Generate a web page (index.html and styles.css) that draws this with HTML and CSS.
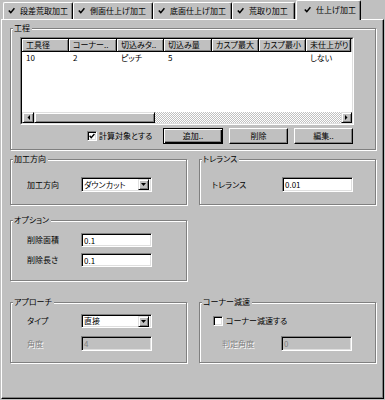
FILE: index.html
```html
<!DOCTYPE html>
<html lang="ja">
<head>
<meta charset="utf-8">
<title>仕上げ加工</title>
<link rel="stylesheet" href="styles.css">
</head>
<body>
<div class="tabs">
  <div class="tab t1"><svg class="tick" viewBox="0 0 7 7" width="7" height="7"><polyline points="0.8,3.4 2.8,5.6 6.4,1.2"/></svg><span>段差荒取加工</span></div>
  <div class="tab t2"><svg class="tick" viewBox="0 0 7 7" width="7" height="7"><polyline points="0.8,3.4 2.8,5.6 6.4,1.2"/></svg><span>側面仕上げ加工</span></div>
  <div class="tab t3"><svg class="tick" viewBox="0 0 7 7" width="7" height="7"><polyline points="0.8,3.4 2.8,5.6 6.4,1.2"/></svg><span>底面仕上げ加工</span></div>
  <div class="tab t4"><svg class="tick" viewBox="0 0 7 7" width="7" height="7"><polyline points="0.8,3.4 2.8,5.6 6.4,1.2"/></svg><span>荒取り加工</span></div>
  <div class="tab t5 active"><svg class="tick" viewBox="0 0 7 7" width="7" height="7"><polyline points="0.8,3.4 2.8,5.6 6.4,1.2"/></svg><span>仕上げ加工</span></div>
</div>
<div class="panel">
  <div class="group g-process">
    <span class="legend">工程</span>
    <div class="listview">
      <div class="lv-inner">
        <div class="lv-head">
          <div class="hd c1">工具径</div>
          <div class="hd c2">コーナー..</div>
          <div class="hd c3">切込みタ..</div>
          <div class="hd c4">切込み量</div>
          <div class="hd c5">カスプ最大</div>
          <div class="hd c6">カスプ最小</div>
          <div class="hd c7">未仕上がり</div>
        </div>
        <div class="lv-body">
          <div class="lv-row">
            <div class="cell c1">10</div>
            <div class="cell c2">2</div>
            <div class="cell c3">ピッチ</div>
            <div class="cell c4">5</div>
            <div class="cell c5"></div>
            <div class="cell c6"></div>
            <div class="cell c7">しない</div>
          </div>
        </div>
        <div class="hscroll">
          <div class="sb-btn sb-left"><svg viewBox="0 0 3 5" width="3" height="5"><polygon points="3,0 3,5 0.5,2.5"/></svg></div>
          <div class="sb-thumb"></div>
          <div class="sb-track"></div>
          <div class="sb-btn sb-right"><svg viewBox="0 0 3 5" width="3" height="5"><polygon points="0,0 0,5 2.5,2.5"/></svg></div>
        </div>
      </div>
    </div>
    <div class="actions">
      <div class="checkline calc">
        <span class="checkbox"><svg viewBox="0 0 6 6" width="6" height="6"><polyline points="0.6,2.8 2.2,4.6 5.4,1"/></svg></span>
        <span>計算対象とする</span>
      </div>
      <div class="btn btn-default">追加..</div>
      <div class="btn">削除</div>
      <div class="btn">編集..</div>
    </div>
  </div>

  <div class="row row2">
    <div class="group g-dir">
      <span class="legend">加工方向</span>
      <div class="field">
        <span class="flabel">加工方向</span>
        <div class="select"><span class="sel-text">ダウンカット</span><span class="sel-btn"><svg viewBox="0 0 5 3" width="5" height="3"><polygon points="0,0 5,0 2.5,3"/></svg></span></div>
      </div>
    </div>
    <div class="group g-tol">
      <span class="legend">トレランス</span>
      <div class="field">
        <span class="flabel">トレランス</span>
        <div class="input">0.01</div>
      </div>
    </div>
  </div>

  <div class="row row3">
    <div class="group g-opt">
      <span class="legend">オプション</span>
      <div class="field">
        <span class="flabel">削除面積</span>
        <div class="input">0.1</div>
      </div>
      <div class="field">
        <span class="flabel">削除長さ</span>
        <div class="input">0.1</div>
      </div>
    </div>
  </div>

  <div class="row row4">
    <div class="group g-app">
      <span class="legend">アプローチ</span>
      <div class="field">
        <span class="flabel">タイプ</span>
        <div class="select"><span class="sel-text">直接</span><span class="sel-btn"><svg viewBox="0 0 5 3" width="5" height="3"><polygon points="0,0 5,0 2.5,3"/></svg></span></div>
      </div>
      <div class="field">
        <span class="flabel disabled">角度</span>
        <div class="input input-disabled">4</div>
      </div>
    </div>
    <div class="group g-corner">
      <span class="legend">コーナー減速</span>
      <div class="checkline corner">
        <span class="checkbox"></span>
        <span>コーナー減速する</span>
      </div>
      <div class="field">
        <span class="flabel disabled">判定角度</span>
        <div class="input input-disabled">0</div>
      </div>
    </div>
  </div>
</div>
</body>
</html>
```
FILE: styles.css
```css
* { box-sizing: border-box; }
html, body { margin: 0; padding: 0; }
body {
  width: 385px;
  height: 400px;
  overflow: hidden;
  background: #c0c0c0;
  color: #000;
  font-family: "Noto Sans CJK JP", "Noto Sans", sans-serif;
  font-size: 8px;
  line-height: 10px;
  font-feature-settings: "palt";
}

/* ---------- tabs ---------- */
.tabs {
  display: flex;
  align-items: flex-end;
  height: 19px;
  padding-left: 3px;
}
.tab {
  height: 17px;
  display: flex;
  align-items: center;
  padding: 0 0 1px 4px;
  border-top: 1px solid #fff;
  border-left: 1px solid #fff;
  border-right: 1px solid #000;
  border-radius: 2px 2px 0 0;
  box-shadow: inset -1px 0 0 #808080;
  white-space: nowrap;
}
.tick { flex: none; margin-right: 5px; }
.tick polyline { fill: none; stroke: #000; stroke-width: 1.5; }
.t1 { width: 70px; }
.t2 { width: 80px; }
.t3 { width: 79px; }
.t4 { width: 63px; }
.t5 { width: 65px; }
.tab.active {
  height: 20px;
  margin-bottom: -1px;
  margin-left: 1px;
  padding-left: 7px;
  padding-bottom: 2px;
  background: #c0c0c0;
  position: relative;
  z-index: 1;
}

/* ---------- panel ---------- */
.panel {
  margin-left: 1px;
  width: 383px;
  height: 380px;
  border-top: 1px solid #fff;
  border-left: 1px solid #fff;
  border-right: 1px solid #000;
  border-bottom: 1px solid #000;
  box-shadow: inset -1px -1px 0 #808080;
  padding: 8px 0 0 8px;
}

/* ---------- group boxes ---------- */
.group {
  position: relative;
  border: 1px solid #808080;
  box-shadow: 1px 1px 0 #fff, inset 1px 1px 0 #fff;
}
.legend {
  position: absolute;
  top: -6px;
  left: 2px;
  padding: 0 2px 0 1px;
  background: #c0c0c0;
  white-space: nowrap;
}

.g-process {
  width: 366px;
  height: 122px;
  padding: 8px 0 0 9px;
}

/* ---------- list view ---------- */
.listview {
  width: 334px;
  height: 88px;
  border: 1px solid;
  border-color: #808080 #fff #fff #808080;
}
.lv-inner {
  height: 100%;
  border: 1px solid;
  border-color: #000 #dfdfdf #dfdfdf #000;
  background: #fff;
  display: flex;
  flex-direction: column;
}
.lv-head {
  display: flex;
  height: 13px;
  flex: none;
  background: #c0c0c0;
}
.hd {
  height: 13px;
  padding: 1px 0 0 4px;
  border-right: 1px solid #000;
  border-bottom: 1px solid #000;
  box-shadow: inset 1px 1px 0 #fff, inset -1px -1px 0 #808080;
  white-space: nowrap;
  overflow: hidden;
}
.c1 { width: 47px; }
.c2 { width: 48px; }
.c3 { width: 47px; }
.c4 { width: 48px; }
.c5 { width: 47px; }
.c6 { width: 47px; }
.c7 { width: 45px; }
.lv-body { flex: 1; background: #fff; padding-top: 1px; }
.lv-row { display: flex; height: 10px; }
.cell { padding-left: 4px; white-space: nowrap; }

.hscroll {
  display: flex;
  height: 11px;
  flex: none;
}
.sb-btn, .sb-thumb {
  background: #c0c0c0;
  border: 1px solid;
  border-color: #dfdfdf #000 #000 #dfdfdf;
  box-shadow: inset 1px 1px 0 #fff, inset -1px -1px 0 #808080;
}
.sb-btn {
  width: 12px;
  display: flex;
  align-items: center;
  justify-content: center;
}
.sb-btn svg { fill: #000; }
.sb-right { width: 11px; }
.sb-thumb { width: 121px; }
.sb-track {
  flex: 1;
  background: repeating-conic-gradient(#fff 0 25%, #c0c0c0 0 50%) 0 0 / 2px 2px;
}

/* ---------- actions row ---------- */
.actions {
  display: flex;
  align-items: center;
  width: 334px;
  margin-top: 3px;
  padding: 0 1px 0 67px;
  gap: 6px;
}
.checkline { display: flex; align-items: center; white-space: nowrap; }
.calc { flex: 1; }
.checkbox {
  flex: none;
  width: 10px;
  height: 10px;
  margin-right: 2px;
  background: #fff;
  border: 1px solid;
  border-color: #808080 #fff #fff #808080;
  box-shadow: inset 1px 1px 0 #000, inset -1px -1px 0 #dfdfdf;
  display: flex;
  align-items: center;
  justify-content: center;
}
.checkbox polyline { fill: none; stroke: #000; stroke-width: 1.4; }
.btn {
  flex: none;
  width: 59px;
  height: 16px;
  display: flex;
  align-items: center;
  justify-content: center;
  border: 1px solid;
  border-color: #fff #000 #000 #fff;
  box-shadow: inset -1px -1px 0 #808080;
  white-space: nowrap;
}
.btn-default {
  width: 60px;
  border-color: #000;
  box-shadow: inset 1px 1px 0 #fff, inset -1px -1px 0 #000, inset -2px -2px 0 #808080;
}

/* ---------- rows of groups ---------- */
.row { display: flex; gap: 12px; }
.row2 { margin-top: 9px; }
.row3 { margin-top: 15px; }
.row4 { margin-top: 21px; }

.g-dir, .g-tol { width: 177px; height: 46px; padding-top: 17px; }
.g-opt, .g-app, .g-corner { width: 177px; height: 61px; }
.g-dir, .g-opt, .g-app { padding-left: 16px; }
.g-tol, .g-corner { padding-left: 12px; }
.g-opt { padding-top: 12px; }
.g-app, .g-corner { padding-top: 11px; }

.field { display: flex; align-items: center; }
.g-opt .field + .field { margin-top: 6px; }
.g-app .field + .field, .g-corner .field { margin-top: 8px; }
.flabel { flex: none; width: 54px; white-space: nowrap; }
.g-tol .flabel { width: 70px; }
.g-corner .flabel { width: 59px; margin-left: 10px; }
.flabel.disabled { color: #808080; text-shadow: 1px 1px 0 #fff; }

.input, .select {
  width: 71px;
  height: 15px;
  background: #fff;
  border: 1px solid;
  border-color: #808080 #fff #fff #808080;
  box-shadow: inset 1px 1px 0 #000, inset -1px -1px 0 #dfdfdf;
  padding: 2px 0 0 2px;
  white-space: nowrap;
}
.g-opt .input { height: 14px; }
.g-app .select { height: 14px; }
.input-disabled { background: #c0c0c0; color: #808080; }

.select {
  display: flex;
  align-items: center;
  padding: 0 2px 0 2px;
}
.sel-text { flex: 1; }
.sel-btn {
  flex: none;
  width: 11px;
  height: 11px;
  display: flex;
  align-items: center;
  justify-content: center;
  background: #c0c0c0;
  border: 1px solid;
  border-color: #dfdfdf #000 #000 #dfdfdf;
  box-shadow: inset 1px 1px 0 #fff, inset -1px -1px 0 #808080;
}
.sel-btn svg { fill: #000; }

.corner { height: 14px; padding-left: 1px; }
.corner .checkbox { margin-right: 3px; }
```
